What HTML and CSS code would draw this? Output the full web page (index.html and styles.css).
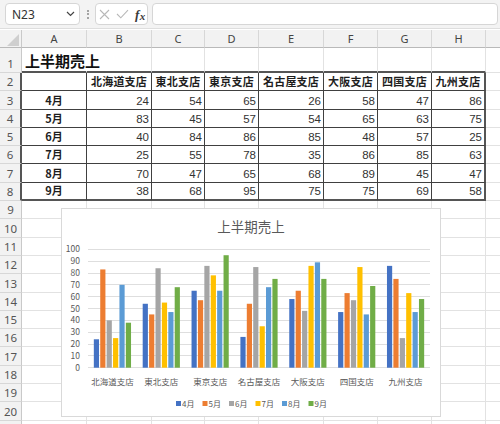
FILE: index.html
```
<!DOCTYPE html>
<html lang="ja">
<head>
<meta charset="utf-8">
<title>上半期売上</title>
<link rel="stylesheet" href="styles.css">
</head>
<body>
<div class="app">
  <div class="fbar">
    <div class="namebox"><span class="ref">N23</span><svg class="chev" width="9" height="6" viewBox="0 0 9 6"><path d="M1 1 L4.5 4.5 L8 1" fill="none" stroke="#444" stroke-width="1.2"/></svg></div>
    <div class="dots"><i></i><i></i><i></i></div>
    <div class="fxbox">
      <svg class="ico-x" width="11" height="11" viewBox="0 0 11 11"><path d="M1 1L10 10M10 1L1 10" stroke="#b8b8b8" stroke-width="1.1"/></svg>
      <svg class="ico-ok" width="13" height="10" viewBox="0 0 13 10"><path d="M1 5L4.8 8.8L12 1.2" fill="none" stroke="#b8b8b8" stroke-width="1.1"/></svg>
      <span class="fx"><i>f</i><i class="x">x</i></span>
    </div>
    <div class="formula"></div>
  </div>
  <div class="sheet">
    <div class="grid">
      <div class="corner"><svg width="12" height="12" viewBox="0 0 12 12"><path d="M12 0V12H0Z" fill="#cfcfcf"/></svg></div>
      <div class="ch">A</div><div class="ch">B</div><div class="ch">C</div><div class="ch">D</div><div class="ch">E</div><div class="ch">F</div><div class="ch">G</div><div class="ch">H</div><div class="ch"></div>

      <div class="rh">1</div>
      <div class="title tb nr">上半期売上</div><div class="tb"></div><div class="tb"></div><div class="tb"></div><div class="tb"></div><div class="tb"></div><div class="tb"></div><div class="tb"></div><div></div>

      <div class="rh d">2</div>
      <div class="t"></div><div class="t h">北海道支店</div><div class="t h">東北支店</div><div class="t h">東京支店</div><div class="t h">名古屋支店</div><div class="t h">大阪支店</div><div class="t h">四国支店</div><div class="t h r">九州支店</div><div></div>

      <div class="rh d">3</div>
      <div class="t m">4月</div><div class="t n">24</div><div class="t n">54</div><div class="t n">65</div><div class="t n">26</div><div class="t n">58</div><div class="t n">47</div><div class="t n r">86</div><div></div>

      <div class="rh d">4</div>
      <div class="t m">5月</div><div class="t n">83</div><div class="t n">45</div><div class="t n">57</div><div class="t n">54</div><div class="t n">65</div><div class="t n">63</div><div class="t n r">75</div><div></div>

      <div class="rh d">5</div>
      <div class="t m">6月</div><div class="t n">40</div><div class="t n">84</div><div class="t n">86</div><div class="t n">85</div><div class="t n">48</div><div class="t n">57</div><div class="t n r">25</div><div></div>

      <div class="rh d">6</div>
      <div class="t m">7月</div><div class="t n">25</div><div class="t n">55</div><div class="t n">78</div><div class="t n">35</div><div class="t n">86</div><div class="t n">85</div><div class="t n r">63</div><div></div>

      <div class="rh d">7</div>
      <div class="t m">8月</div><div class="t n">70</div><div class="t n">47</div><div class="t n">65</div><div class="t n">68</div><div class="t n">89</div><div class="t n">45</div><div class="t n r">47</div><div></div>

      <div class="rh d">8</div>
      <div class="t m b">9月</div><div class="t n b">38</div><div class="t n b">68</div><div class="t n b">95</div><div class="t n b">75</div><div class="t n b">75</div><div class="t n b">69</div><div class="t n r b">58</div><div></div>

      <div class="rh">9</div><div></div><div></div><div></div><div></div><div></div><div></div><div></div><div></div><div></div>
      <div class="rh">10</div><div></div><div></div><div></div><div></div><div></div><div></div><div></div><div></div><div></div>
      <div class="rh">11</div><div></div><div></div><div></div><div></div><div></div><div></div><div></div><div></div><div></div>
      <div class="rh">12</div><div></div><div></div><div></div><div></div><div></div><div></div><div></div><div></div><div></div>
      <div class="rh">13</div><div></div><div></div><div></div><div></div><div></div><div></div><div></div><div></div><div></div>
      <div class="rh">14</div><div></div><div></div><div></div><div></div><div></div><div></div><div></div><div></div><div></div>
      <div class="rh">15</div><div></div><div></div><div></div><div></div><div></div><div></div><div></div><div></div><div></div>
      <div class="rh">16</div><div></div><div></div><div></div><div></div><div></div><div></div><div></div><div></div><div></div>
      <div class="rh">17</div><div></div><div></div><div></div><div></div><div></div><div></div><div></div><div></div><div></div>
      <div class="rh">18</div><div></div><div></div><div></div><div></div><div></div><div></div><div></div><div></div><div></div>
      <div class="rh">19</div><div></div><div></div><div></div><div></div><div></div><div></div><div></div><div></div><div></div>
      <div class="rh">20</div><div></div><div></div><div></div><div></div><div></div><div></div><div></div><div></div><div></div>
      <div class="rh"></div><div></div><div></div><div></div><div></div><div></div><div></div><div></div><div></div><div></div>
    </div>

    <div class="chart">
      <svg width="380" height="209" viewBox="0 0 380 209">
        <rect x="0.5" y="0.5" width="379" height="208" fill="#fff" stroke="#d9d9d9"/>
        <text class="ctitle" x="190" y="24" text-anchor="middle">上半期売上</text>
        <path d="M27 159.5H369M27 147.5H369M27 136.5H369M27 124.5H369M27 112.5H369M27 100.5H369M27 88.5H369M27 76.5H369M27 65.5H369M27 53.5H369M27 41.5H369" stroke="#dedede" stroke-width="1"/>
        <g class="ylab" text-anchor="end">
          <text x="19" y="162.7">0</text>
          <text x="19" y="150.9">10</text>
          <text x="19" y="139">20</text>
          <text x="19" y="127.2">30</text>
          <text x="19" y="115.3">40</text>
          <text x="19" y="103.5">50</text>
          <text x="19" y="91.7">60</text>
          <text x="19" y="79.8">70</text>
          <text x="19" y="68">80</text>
          <text x="19" y="56.1">90</text>
          <text x="19" y="44.3">100</text>
        </g>
        <g transform="translate(0 159.7) scale(1 -1.184)">
          <g fill="#4472c4">
            <rect x="32.83" y="0" width="5.2" height="24"/><rect x="81.69" y="0" width="5.2" height="54"/><rect x="130.54" y="0" width="5.2" height="65"/><rect x="179.40" y="0" width="5.2" height="26"/><rect x="228.26" y="0" width="5.2" height="58"/><rect x="277.11" y="0" width="5.2" height="47"/><rect x="325.97" y="0" width="5.2" height="86"/>
          </g>
          <g fill="#ed7d31">
            <rect x="39.23" y="0" width="5.2" height="83"/><rect x="88.09" y="0" width="5.2" height="45"/><rect x="136.94" y="0" width="5.2" height="57"/><rect x="185.80" y="0" width="5.2" height="54"/><rect x="234.66" y="0" width="5.2" height="65"/><rect x="283.51" y="0" width="5.2" height="63"/><rect x="332.37" y="0" width="5.2" height="75"/>
          </g>
          <g fill="#a5a5a5">
            <rect x="45.63" y="0" width="5.2" height="40"/><rect x="94.49" y="0" width="5.2" height="84"/><rect x="143.34" y="0" width="5.2" height="86"/><rect x="192.20" y="0" width="5.2" height="85"/><rect x="241.06" y="0" width="5.2" height="48"/><rect x="289.91" y="0" width="5.2" height="57"/><rect x="338.77" y="0" width="5.2" height="25"/>
          </g>
          <g fill="#ffc000">
            <rect x="52.03" y="0" width="5.2" height="25"/><rect x="100.89" y="0" width="5.2" height="55"/><rect x="149.74" y="0" width="5.2" height="78"/><rect x="198.60" y="0" width="5.2" height="35"/><rect x="247.46" y="0" width="5.2" height="86"/><rect x="296.31" y="0" width="5.2" height="85"/><rect x="345.17" y="0" width="5.2" height="63"/>
          </g>
          <g fill="#5b9bd5">
            <rect x="58.43" y="0" width="5.2" height="70"/><rect x="107.29" y="0" width="5.2" height="47"/><rect x="156.14" y="0" width="5.2" height="65"/><rect x="205.00" y="0" width="5.2" height="68"/><rect x="253.86" y="0" width="5.2" height="89"/><rect x="302.71" y="0" width="5.2" height="45"/><rect x="351.57" y="0" width="5.2" height="47"/>
          </g>
          <g fill="#70ad47">
            <rect x="64.83" y="0" width="5.2" height="38"/><rect x="113.69" y="0" width="5.2" height="68"/><rect x="162.54" y="0" width="5.2" height="95"/><rect x="211.40" y="0" width="5.2" height="75"/><rect x="260.26" y="0" width="5.2" height="75"/><rect x="309.11" y="0" width="5.2" height="69"/><rect x="357.97" y="0" width="5.2" height="58"/>
          </g>
        </g>
        <g class="xlab" text-anchor="middle">
          <text x="51.43" y="176.5">北海道支店</text>
          <text x="100.29" y="176.5">東北支店</text>
          <text x="149.14" y="176.5">東京支店</text>
          <text x="198" y="176.5">名古屋支店</text>
          <text x="246.86" y="176.5">大阪支店</text>
          <text x="295.71" y="176.5">四国支店</text>
          <text x="344.57" y="176.5">九州支店</text>
        </g>
        <g class="legend">
          <rect x="115" y="193" width="5" height="5" fill="#4472c4"/><text x="121" y="199">4月</text>
          <rect x="141.5" y="193" width="5" height="5" fill="#ed7d31"/><text x="147.5" y="199">5月</text>
          <rect x="168" y="193" width="5" height="5" fill="#a5a5a5"/><text x="174" y="199">6月</text>
          <rect x="194.5" y="193" width="5" height="5" fill="#ffc000"/><text x="200.5" y="199">7月</text>
          <rect x="221" y="193" width="5" height="5" fill="#5b9bd5"/><text x="227" y="199">8月</text>
          <rect x="247.5" y="193" width="5" height="5" fill="#70ad47"/><text x="253.5" y="199">9月</text>
        </g>
      </svg>
    </div>
  </div>
</div>
</body>
</html>
```
FILE: styles.css
```
html, body {
  margin: 0;
  padding: 0;
  background: #fff;
}
body {
  font-family: "Liberation Sans", "Noto Sans CJK JP", sans-serif;
}
.app {
  width: 500px;
  height: 424px;
  overflow: hidden;
}

/* formula bar */
.fbar {
  height: 29px;
  box-sizing: border-box;
  background: #f3f3f3;
  border-bottom: 1px solid #dedede;
  display: flex;
  align-items: center;
  padding-left: 5px;
  margin-bottom: 1px;
}
.namebox {
  width: 75px;
  height: 22px;
  box-sizing: border-box;
  background: #fff;
  border: 1px solid #d6d6d6;
  border-radius: 4px;
  display: flex;
  align-items: center;
  justify-content: space-between;
  padding: 0 4px 0 6px;
}
.ref {
  font-family: "Noto Sans", "Liberation Sans", sans-serif;
  font-size: 12px;
  color: #333;
}
.dots {
  width: 15px;
  height: 22px;
  display: flex;
  flex-direction: column;
  align-items: center;
  justify-content: center;
  gap: 1.5px;
}
.dots i {
  width: 2px;
  height: 2px;
  background: #8a8a8a;
  border-radius: 1px;
}
.fxbox {
  width: 53px;
  height: 22px;
  box-sizing: border-box;
  background: #fff;
  border: 1px solid #d6d6d6;
  border-radius: 4px;
  display: flex;
  align-items: center;
  padding-left: 3px;
}
.ico-ok {
  margin-left: 6px;
}
.fx {
  margin-left: 6px;
  font-family: "Liberation Serif", serif;
  color: #3a3a3a;
  font-size: 13px;
  line-height: 1;
}
.fx i {
  font-style: italic;
  font-weight: bold;
}
.fx .x {
  font-size: 11px;
  position: relative;
  top: 1px;
  margin-left: 0.5px;
}
.formula {
  flex: 1;
  height: 22px;
  box-sizing: border-box;
  margin-left: 4px;
  margin-right: 2px;
  background: #fff;
  border: 1px solid #d6d6d6;
  border-radius: 4px;
}

/* sheet grid */
.sheet {
  position: relative;
}
.grid {
  display: grid;
  grid-template-columns: 22px 65px 65px 53px 54px 65px 54px 54px 54px 60px;
  grid-template-rows: 18px 25px repeat(20, 18.3px);
}
.grid > div {
  box-sizing: border-box;
  border-right: 1px solid #e2e2e2;
  border-bottom: 1px solid #e2e2e2;
  font-size: 11px;
  line-height: 13px;
  color: #1e1e1e;
  white-space: nowrap;
  display: flex;
  align-items: flex-end;
  padding-bottom: 2px;
}
.grid > .corner {
  background: #f2f2f2;
  border-right-color: #c9c9c9;
  border-bottom-color: #b9b9b9;
  align-items: flex-end;
  justify-content: flex-end;
  padding: 0 2px 1px 0;
}
.grid > .ch {
  background: #f2f2f2;
  border-right-color: #d7d7d7;
  border-bottom-color: #b9b9b9;
  justify-content: center;
  align-items: center;
  padding-bottom: 0;
  font-family: "Noto Sans", "Liberation Sans", sans-serif;
  font-size: 11px;
  color: #444;
}
.grid > .rh {
  background: #f2f2f2;
  border-right-color: #c9c9c9;
  border-bottom-color: #d7d7d7;
  justify-content: center;
  font-family: "Noto Sans", "Liberation Sans", sans-serif;
  font-size: 11.5px;
  color: #555;
}
.grid > .rh.d {
  border-right: 2px solid #555;
}
.grid > .title {
  font-family: "Noto Sans CJK JP", sans-serif;
  font-size: 15px;
  line-height: 18px;
  font-weight: bold;
  color: #111;
  padding-left: 3px;
  padding-bottom: 1px;
  overflow: visible;
}
.grid > .nr {
  border-right-color: transparent;
}
.grid > .tb {
  border-bottom: 2px solid #555;
}
.grid > .t {
  border-right: 1px solid #404040;
  border-bottom: 1px solid #404040;
}
.grid > .t.r {
  border-right: 2px solid #555;
}
.grid > .t.b {
  border-bottom: 2px solid #555;
}
.grid > .h {
  font-family: "Noto Sans CJK JP", sans-serif;
  font-weight: bold;
  font-size: 11px;
  justify-content: center;
  letter-spacing: 0.2px;
}
.grid > .m {
  font-family: "Noto Sans CJK JP", sans-serif;
  font-weight: bold;
  font-size: 11px;
  justify-content: center;
}
.grid > .n {
  justify-content: flex-end;
  padding-right: 2px;
  padding-bottom: 1px;
  font-size: 11.5px;
  color: #333;
}

/* chart overlay */
.chart {
  position: absolute;
  left: 61px;
  top: 178px;
  width: 380px;
  height: 209px;
}
.chart svg {
  display: block;
  font-family: "Noto Sans CJK JP", sans-serif;
}
.ctitle {
  font-size: 13.5px;
  fill: #595959;
}
.ylab text {
  font-size: 8.5px;
  fill: #595959;
}
.xlab text {
  font-size: 8.5px;
  fill: #595959;
}
.legend text {
  font-size: 8px;
  fill: #595959;
}
```
